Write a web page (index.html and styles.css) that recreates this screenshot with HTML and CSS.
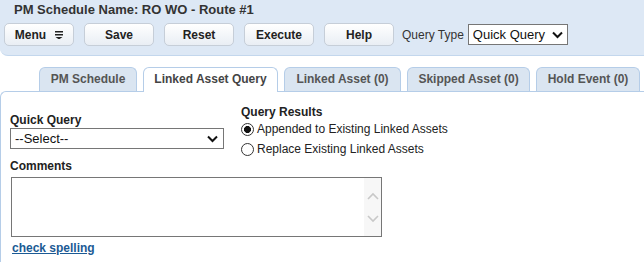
FILE: index.html
```html
<!DOCTYPE html>
<html lang="en">
<head>
    <meta charset="UTF-8">
    <meta name="viewport" content="width=device-width, initial-scale=1.0">
    <title>PM Schedule</title>
    <link rel="stylesheet" href="styles.css">
</head>
<body>
    <div class="header">
        <h1 class="title">PM Schedule Name: RO WO - Route #1</h1>
        <div class="toolbar">
            <button class="btn">Menu
                <svg class="menu-icon" width="8" height="8" viewBox="0 0 8 8">
                    <rect x="0" y="0" width="8" height="1.5" fill="#222"/>
                    <rect x="0" y="3" width="8" height="1.5" fill="#222"/>
                    <polygon points="0.5,6 7.5,6 4,8.5" fill="#222"/>
                </svg>
            </button>
            <button class="btn">Save</button>
            <button class="btn">Reset</button>
            <button class="btn">Execute</button>
            <button class="btn">Help</button>
            <label class="qt-label">Query Type</label>
            <div class="select-wrap qt-select">
                <select>
                    <option>Quick Query</option>
                </select>
                <svg class="chev" width="11" height="8" viewBox="0 0 11 8">
                    <polyline points="1,1.5 5.5,6 10,1.5" fill="none" stroke="#111" stroke-width="2"/>
                </svg>
            </div>
        </div>
    </div>

    <div class="tabs">
        <div class="tab tab-pm">PM Schedule</div>
        <div class="tab tab-query active">Linked Asset Query</div>
        <div class="tab tab-linked">Linked Asset (0)</div>
        <div class="tab tab-skipped">Skipped Asset (0)</div>
        <div class="tab tab-hold">Hold Event (0)</div>
    </div>

    <div class="panel">
        <div class="row">
            <div class="left">
                <div class="field-label">Quick Query</div>
                <div class="select-wrap qq-select">
                    <select>
                        <option>--Select--</option>
                    </select>
                    <svg class="chev" width="11" height="8" viewBox="0 0 11 8">
                        <polyline points="1,1.5 5.5,6 10,1.5" fill="none" stroke="#111" stroke-width="2"/>
                    </svg>
                </div>
            </div>
            <div class="right">
                <div class="field-label">Query Results</div>
                <label class="radio-row"><input type="radio" name="qr" checked> Appended to Existing Linked Assets</label>
                <label class="radio-row"><input type="radio" name="qr"> Replace Existing Linked Assets</label>
            </div>
        </div>

        <div class="field-label comments-label">Comments</div>
        <div class="comments">
            <textarea></textarea>
            <div class="scroll">
                <svg width="12" height="8" viewBox="0 0 12 8">
                    <polyline points="1,7 6,2 11,7" fill="none" stroke="#c8c8c8" stroke-width="1.6"/>
                </svg>
                <svg width="12" height="8" viewBox="0 0 12 8">
                    <polyline points="1,1 6,6 11,1" fill="none" stroke="#c8c8c8" stroke-width="1.6"/>
                </svg>
            </div>
        </div>
        <a href="" class="spell">check spelling</a>
    </div>
</body>
</html>
```

FILE: styles.css
```css
body {
    margin: 0;
    font-family: "Liberation Sans", Arial, sans-serif;
    font-size: 12px;
    color: #222;
    background: #fff;
}
.header {
    height: 55px;
    background-color: #dde8f5;
    border-bottom: 1px solid #c3d7ed;
    border-bottom-left-radius: 8px;
}
.title {
    margin: 0;
    padding: 2px 0 0 14px;
    font-size: 13px;
    line-height: 16px;
    font-weight: bold;
    color: #333;
}
.toolbar {
    display: flex;
    align-items: center;
    margin-top: 5px;
    padding-left: 4px;
}
.btn {
    width: 70px;
    height: 23px;
    margin-right: 10px;
    border: 1px solid #c6ced8;
    border-radius: 5px;
    background: linear-gradient(#ffffff, #e9eef4);
    font-family: inherit;
    font-size: 12px;
    font-weight: bold;
    color: #222;
    padding: 0;
    display: flex;
    align-items: center;
    justify-content: center;
}
.menu-icon {
    margin-left: 9px;
}
.qt-label {
    margin-left: -2px;
    color: #333;
}
.select-wrap {
    position: relative;
}
.select-wrap select {
    appearance: none;
    -webkit-appearance: none;
    border: 1px solid #767676;
    border-radius: 0;
    background: #fff;
    font-family: inherit;
    font-size: 12px;
    color: #111;
    padding: 0 0 0 4px;
    height: 21px;
    display: block;
}
.select-wrap .chev {
    position: absolute;
    top: 7px;
    pointer-events: none;
}
.qt-select {
    margin-left: 4px;
}
.qt-select select {
    width: 100px;
    font-size: 13px;
}
.qt-select .chev {
    right: 5px;
}
.qq-select {
    margin-top: 1px;
}
.qq-select select {
    width: 214px;
    font-size: 13px;
}
.qq-select .chev {
    right: 6px;
}
.tabs {
    display: flex;
    gap: 6px;
    padding-left: 39px;
    margin-top: 11px;
    position: relative;
    z-index: 1;
    white-space: nowrap;
}
.tab {
    flex-shrink: 0;
    box-sizing: border-box;
    height: 24px;
    line-height: 23px;
    text-align: center;
    background-color: #dae5f1;
    border: 1px solid #b5cde8;
    border-bottom: none;
    border-top-left-radius: 6px;
    border-top-right-radius: 6px;
    font-weight: bold;
    color: #555;
}
.tab-pm { width: 98px; }
.tab-query { width: 135px; }
.tab-linked { width: 117px; }
.tab-skipped { width: 123px; }
.tab-hold { width: 104px; }
.tab.active {
    background-color: #fff;
    height: 25px;
    margin-bottom: -1px;
    color: #444;
}
.panel {
    border-top: 1px solid #b5cde8;
    border-left: 1px solid #b5cde8;
    border-top-left-radius: 6px;
    padding: 13px 0 0 9px;
    height: 158px;
}
.row {
    display: flex;
}
.left {
    width: 214px;
    padding-top: 8px;
}
.right {
    margin-left: 17px;
}
.field-label {
    font-weight: bold;
    line-height: 14px;
    color: #222;
}
.radio-row {
    display: flex;
    align-items: center;
    height: 20px;
    color: #222;
}
.radio-row input {
    appearance: none;
    -webkit-appearance: none;
    width: 13px;
    height: 13px;
    margin: 0 3px 0 0;
    border: 1px solid #333;
    border-radius: 50%;
    background: #fff;
}
.radio-row input:checked {
    background: radial-gradient(circle, #111 3.2px, #fff 3.8px);
}
.comments-label {
    line-height: 13px;
    margin-top: 1px;
}
.comments {
    display: flex;
    width: 369px;
    height: 58px;
    margin: 4px 0 0 1px;
    border: 1px solid #767676;
}
.comments textarea {
    flex: 1;
    border: none;
    resize: none;
    outline: none;
    font-family: inherit;
    font-size: 12px;
}
.scroll {
    width: 17px;
    background: #f7f7f7;
    display: flex;
    flex-direction: column;
    justify-content: space-around;
    align-items: center;
    padding: 6px 0;
}
.spell {
    display: inline-block;
    margin: 4px 0 0 2px;
    font-weight: bold;
    line-height: 14px;
    color: #1b5a94;
}
```
